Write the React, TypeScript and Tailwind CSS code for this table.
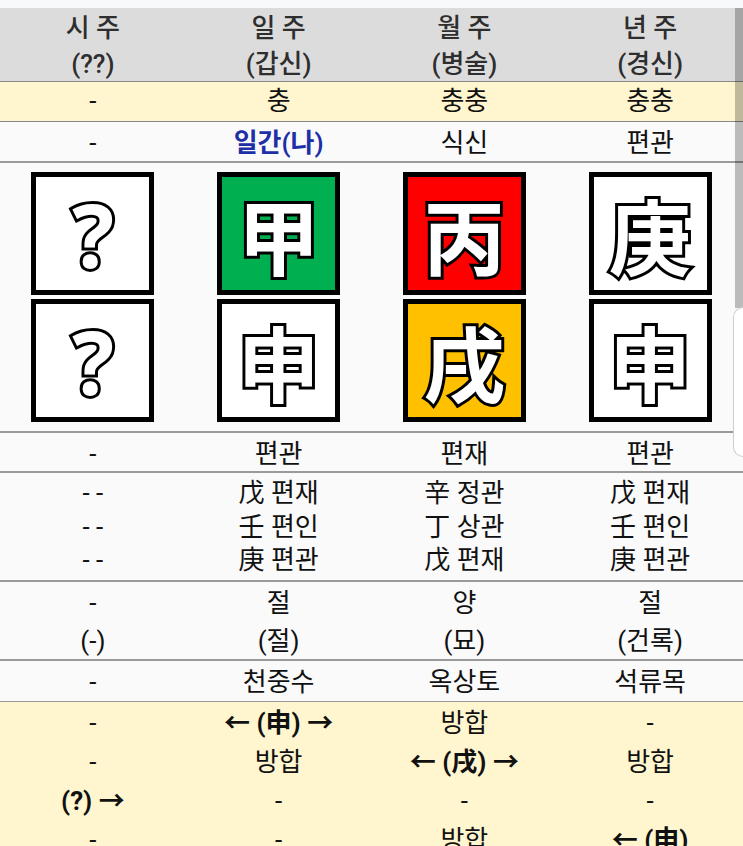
import React from "react";

const font = "font-['Roboto','Noto_Sans_CJK_KR',sans-serif]";

type Cell = React.ReactNode;

const Row = ({ cells, className }: { cells: Cell[]; className: string }) => (
  <div className={`grid grid-cols-4 text-center ${className}`}>
    {cells.map((c, i) => (
      <div key={i} className="flex flex-col items-center justify-center">
        {c}
      </div>
    ))}
  </div>
);

const Box = ({ ch, bg, big }: { ch: string; bg: string; big?: boolean }) => (
  <div className={`w-[123px] h-[123px] border-[5px] border-black flex items-center justify-center ${bg}`}>
    <span
      className={`text-white [paint-order:stroke_fill] [-webkit-text-stroke:6px_#000] [text-shadow:0_0_2px_#000] ${
        big
          ? "text-[88px] leading-none font-bold font-['Noto_Sans','Noto_Sans_CJK_KR',sans-serif]"
          : "text-[82px] leading-none font-bold font-['Noto_Sans_CJK_KR',sans-serif]"
      }`}
    >
      {ch}
    </span>
  </div>
);

const Lines = ({ items, lh }: { items: Cell[]; lh: string }) => (
  <>
    {items.map((t, i) => (
      <div key={i} className={lh}>
        {t}
      </div>
    ))}
  </>
);

export default function App() {
  const pillars = [
    ["?", "?", "bg-white", "bg-white", true],
    ["甲", "申", "bg-[#00b050]", "bg-white", false],
    ["丙", "戌", "bg-[#ff0000]", "bg-[#ffc000]", false],
    ["庚", "申", "bg-white", "bg-white", false],
  ] as const;

  return (
    <div className={`relative w-[743px] h-[846px] overflow-hidden bg-[#fafafa] text-[26px] text-[#111] ${font}`}>
      <div className="h-2 bg-[#f8f9fb]" />

      {/* header */}
      <Row
        className="h-[74px] bg-[#dcdcdc] border-b border-[#888] text-[#2e2e2e] font-medium leading-[36px] pt-[2px]"
        cells={[
          <Lines lh="" items={["시 주", "(??)"]} />,
          <Lines lh="" items={["일 주", "(갑신)"]} />,
          <Lines lh="" items={["월 주", "(병술)"]} />,
          <Lines lh="" items={["년 주", "(경신)"]} />,
        ]}
      />

      <Row className="h-10 bg-[#fff6cf] border-b border-[#888]" cells={["-", "충", "충충", "충충"]} />

      <Row
        className="h-[41px] border-b-2 border-[#9a9a9a] pt-[2px]"
        cells={["-", <span className="text-[#1f2fa8] font-semibold">일간(나)</span>, "식신", "편관"]}
      />

      {/* pillars */}
      <div className="grid grid-cols-4 h-[270px] border-b-2 border-[#9a9a9a] pt-[9px]">
        {pillars.map(([top, bottom, bgTop, bgBottom, big], i) => (
          <div key={i} className="flex flex-col items-center gap-1">
            <Box ch={top} bg={bgTop} big={big} />
            <Box ch={bottom} bg={bgBottom} big={big} />
          </div>
        ))}
      </div>

      <Row className="h-10 border-b-2 border-[#9a9a9a] pt-[2px]" cells={["-", "편관", "편재", "편관"]} />

      <Row
        className="h-[109px] border-b-2 border-[#9a9a9a] pt-[2px]"
        cells={[
          <Lines lh="leading-[33.5px]" items={["- -", "- -", "- -"]} />,
          <Lines lh="leading-[33.5px]" items={["戊 편재", "壬 편인", "庚 편관"]} />,
          <Lines lh="leading-[33.5px]" items={["辛 정관", "丁 상관", "戊 편재"]} />,
          <Lines lh="leading-[33.5px]" items={["戊 편재", "壬 편인", "庚 편관"]} />,
        ]}
      />

      <Row
        className="h-[79px] border-b-2 border-[#9a9a9a] pt-[2px]"
        cells={[
          <Lines lh="leading-[38px]" items={["-", "(-)"]} />,
          <Lines lh="leading-[38px]" items={["절", "(절)"]} />,
          <Lines lh="leading-[38px]" items={["양", "(묘)"]} />,
          <Lines lh="leading-[38px]" items={["절", "(건록)"]} />,
        ]}
      />

      <Row className="h-[41px] border-b border-[#999] pt-[2px]" cells={["-", "천중수", "옥상토", "석류목"]} />

      <div className="grid grid-cols-4 bg-[#fff6cf] text-center pt-[2px] leading-[39px] h-[200px]">
        <div>
          <div>-</div>
          <div>-</div>
          <div className="font-bold">(?) →</div>
          <div>-</div>
        </div>
        <div>
          <div className="font-bold">← (申) →</div>
          <div>방합</div>
          <div>-</div>
          <div>-</div>
        </div>
        <div>
          <div>방합</div>
          <div className="font-bold">← (戌) →</div>
          <div>-</div>
          <div>방합</div>
        </div>
        <div>
          <div>-</div>
          <div>방합</div>
          <div>-</div>
          <div className="font-bold">← (申)</div>
        </div>
      </div>

      {/* scroll handle overlay */}
      <div className="absolute right-0 top-2 w-2 h-[300px] bg-black/25" />
      <div className="absolute right-0 top-[307px] w-[10px] h-[150px] bg-white border border-r-0 border-[#cfcfcf] rounded-l-xl" />
    </div>
  );
}
